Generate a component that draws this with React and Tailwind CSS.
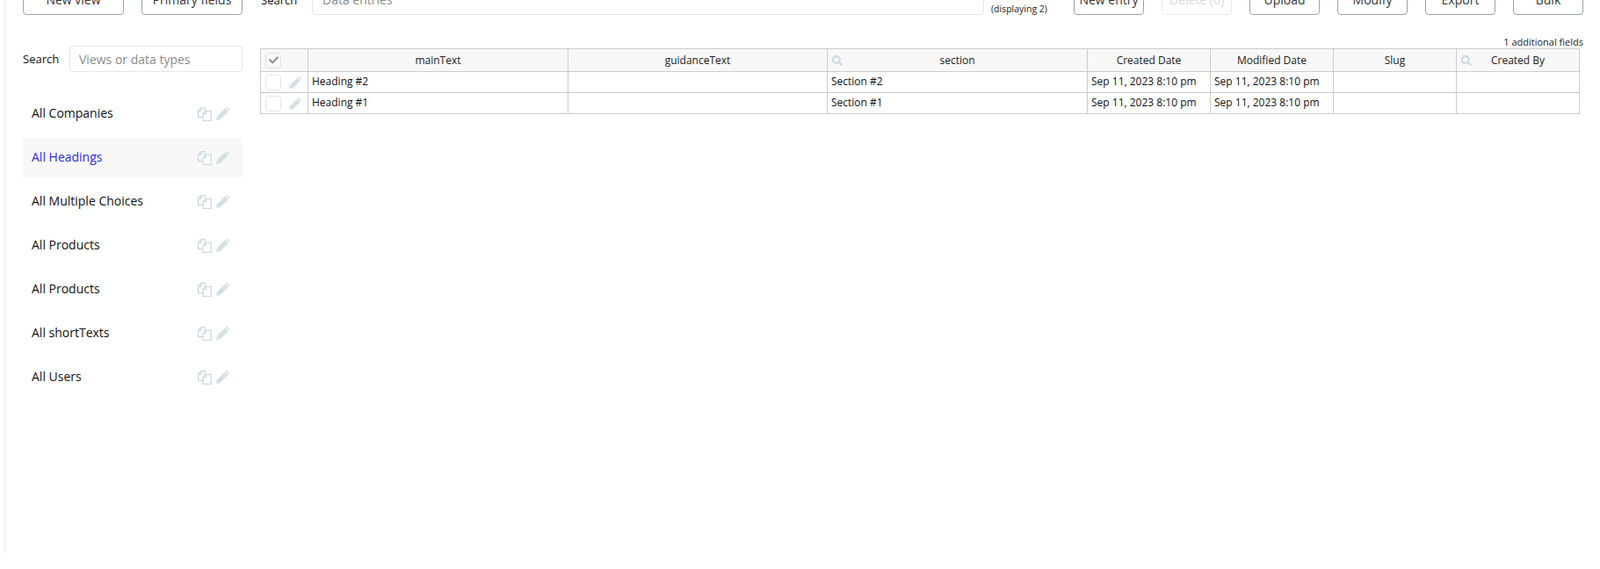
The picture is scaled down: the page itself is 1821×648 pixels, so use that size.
import { FaCheck, FaSearch } from 'react-icons/fa';

const views = ['All Companies', 'All Headings', 'All Multiple Choices', 'All Products', 'All Products', 'All shortTexts', 'All Users'];

const rows = [
  { main: 'Heading #2', section: 'Section #2' },
  { main: 'Heading #1', section: 'Section #1' },
];

function ToolButton({ label, disabled }) {
  return (
    <button
      className={`h-[35px] w-[80px] rounded-[4px] border bg-white pb-[1px] text-[14px] ${
        disabled ? 'border-[#e6ebec] text-[#d8dcdd]' : 'border-[#95a5ab] text-[#333333]'
      }`}
    >
      {label}
    </button>
  );
}

function CopyIcon() {
  return (
    <svg width="16" height="16" viewBox="0 0 16 16" fill="none" stroke="#cddbe2" strokeWidth="1.3">
      <path d="M6 11.5H.7V4L4 .7h4.2V4" />
      <path d="M4 .7V4H.7" />
      <path d="M6 15.3V7.5L9.2 4.3h6.1v11z" fill="#fff" />
      <path d="M9.2 4.3v3.2H6" />
    </svg>
  );
}

function PencilIcon({ size }) {
  return (
    <svg width={size} height={size} viewBox="0 0 16 16" fill="#d3e0e6">
      <path d="M0 16l1.2-5L10.6 1.6l4 4L5 15z" />
      <path d="M11.5.8l.6-.5c.5-.4 1.1-.4 1.5 0l2.2 2.2c.4.4.4 1 0 1.4l-.6.6z" />
    </svg>
  );
}

function Cell({ children }) {
  return <td className="border border-[#cccccc] px-[4px] pb-[2px] text-[#111111] whitespace-nowrap">{children}</td>;
}

function HeaderCell({ label, searchable }) {
  return (
    <th className="relative border border-[#cccccc] bg-[#f8f8f8] font-normal text-[#222222]">
      {searchable && <FaSearch className="absolute left-[5px] top-[7px] text-[#c9d9e0]" size={12} />}
      {label}
    </th>
  );
}

export default function App() {
  return (
    <div className="h-[648px] overflow-hidden bg-white font-['Open_Sans',sans-serif]">
      <div className="ml-[5px] h-full border-l border-[#f0f0f0] pl-[20px]">
        {/* Toolbar, scrolled partly out of view */}
        <div className="mt-[-18px] flex h-[35px] items-center">
          <button className="h-[35px] w-[115px] rounded-[4px] border border-[#95a5ab] bg-white pb-[1px] text-[14px] text-[#333333]">New view</button>
          <button className="ml-[20px] h-[35px] w-[115px] rounded-[4px] border border-[#95a5ab] bg-white pb-[1px] text-[14px] text-[#333333]">Primary fields</button>
          <span className="ml-[21px] w-[58px] pt-[1px] text-[13px] leading-[20px] text-[#111111]">Search</span>
          <input
            className="h-[35px] w-[765px] rounded-[4px] border border-[#e3e6e8] px-[11px] text-[14px] placeholder:text-[#8a8a8a]"
            placeholder="Data entries"
          />
          <div className="ml-[8px] w-[94px] self-end text-[10.5px] leading-[14px] text-[#222222]">(displaying 2)</div>
          <div className="flex gap-[20px]">
            <ToolButton label="New entry" />
            <ToolButton label="Delete (0)" disabled />
            <ToolButton label="Upload" />
            <ToolButton label="Modify" />
            <ToolButton label="Export" />
            <ToolButton label="Bulk" />
          </div>
        </div>

        <div className="mt-[23px] flex gap-[20px]">
          {/* Views sidebar */}
          <div className="w-[250px] pt-[12px]">
            <div className="flex items-center">
              <span className="w-[53px] pt-[1px] text-[13px] text-[#111111]">Search</span>
              <input
                className="h-[30px] w-[197px] rounded-[4px] border border-[#e3e6e8] px-[10px] text-[14px] placeholder:text-[#8a8a8a]"
                placeholder="Views or data types"
              />
            </div>
            <div className="mt-[25px] flex flex-col gap-[5px]">
              {views.map((name, i) => (
                <div key={i} className={`flex h-[45px] items-center pl-[10px] pr-[15px] ${name === 'All Headings' ? 'bg-[#f8f8f8]' : ''}`}>
                  <span className={`flex-1 pb-[2px] text-[14px] ${name === 'All Headings' ? 'text-[#2b2bd8]' : 'text-[#111111]'}`}>{name}</span>
                  <CopyIcon />
                  <span className="ml-[5px]">
                    <PencilIcon size={15} />
                  </span>
                </div>
              ))}
            </div>
          </div>

          {/* Data table */}
          <div className="w-[1506px]">
            <div className="h-[15px] text-right text-[11px] leading-[15px] text-[#222222]">1 additional fields</div>
            <table className="w-[1501px] table-fixed border-collapse text-[12px]">
              <colgroup>
                <col className="w-[54px]" />
                <col className="w-[296px]" />
                <col className="w-[295px]" />
                <col className="w-[296px]" />
                <col className="w-[140px]" />
                <col className="w-[140px]" />
                <col className="w-[140px]" />
                <col className="w-[140px]" />
              </colgroup>
              <thead>
                <tr className="h-[26px]">
                  <th className="border border-[#cccccc] bg-[#f8f8f8] pl-[5px]">
                    <div className="flex h-[18px] w-[18px] items-center justify-center rounded-[4px] border border-[#dfe3e5]">
                      <FaCheck className="text-[#88949a]" size={11} />
                    </div>
                  </th>
                  <HeaderCell label="mainText" />
                  <HeaderCell label="guidanceText" />
                  <HeaderCell label="section" searchable />
                  <HeaderCell label="Created Date" />
                  <HeaderCell label="Modified Date" />
                  <HeaderCell label="Slug" />
                  <HeaderCell label="Created By" searchable />
                </tr>
              </thead>
              <tbody>
                {rows.map((row) => (
                  <tr key={row.main} className="h-[24px]">
                    <td className="border border-[#cccccc] pl-[5px]">
                      <div className="flex items-center">
                        <div className="h-[18px] w-[18px] rounded-[4px] border border-[#e3e6e8]" />
                        <span className="ml-[9px]">
                          <PencilIcon size={14} />
                        </span>
                      </div>
                    </td>
                    <Cell>{row.main}</Cell>
                    <Cell />
                    <Cell>{row.section}</Cell>
                    <Cell>Sep 11, 2023 8:10 pm</Cell>
                    <Cell>Sep 11, 2023 8:10 pm</Cell>
                    <Cell />
                    <Cell />
                  </tr>
                ))}
              </tbody>
            </table>
          </div>
        </div>
      </div>
    </div>
  );
}
